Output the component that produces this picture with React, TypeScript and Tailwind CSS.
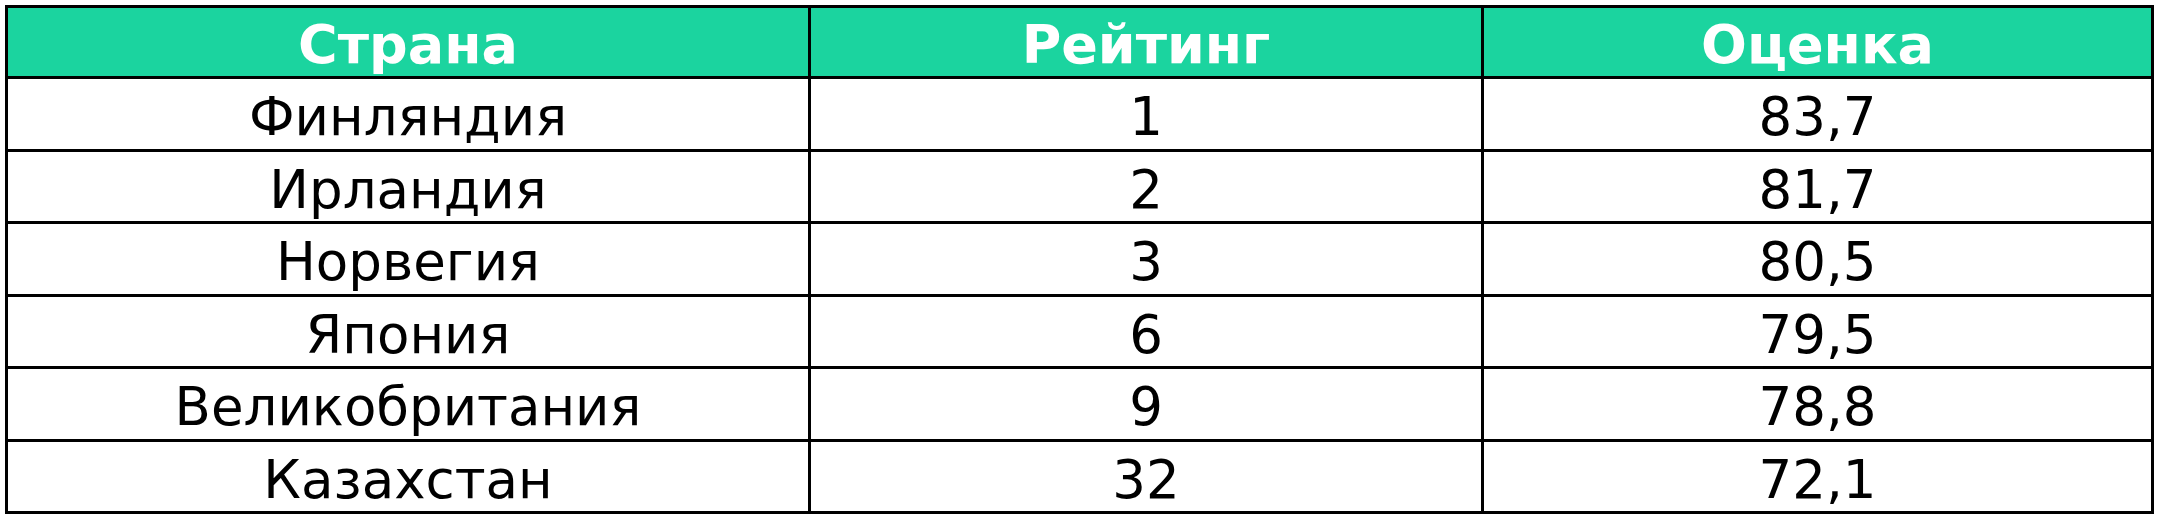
const ROWS = [
  { country: "Финляндия", rank: "1", score: "83,7" },
  { country: "Ирландия", rank: "2", score: "81,7" },
  { country: "Норвегия", rank: "3", score: "80,5" },
  { country: "Япония", rank: "6", score: "79,5" },
  { country: "Великобритания", rank: "9", score: "78,8" },
  { country: "Казахстан", rank: "32", score: "72,1" },
];

export default function App() {
  return (
    <div className="w-[2160px] h-[519px] bg-white pl-[5px] pt-[5px] font-['DejaVu_Sans',Verdana,sans-serif]">
      <table className="w-[2146px] border-collapse table-fixed">
        <colgroup>
          <col className="w-[803px]" />
          <col className="w-[673px]" />
          <col className="w-[670px]" />
        </colgroup>
        <thead>
          <tr className="h-[71px] bg-[#1bd49f] text-white">
            {["Страна", "Рейтинг", "Оценка"].map((h) => (
              <th
                key={h}
                className="border-[3px] border-black pt-[6px] text-center align-middle text-[54px] font-bold leading-none"
              >
                {h}
              </th>
            ))}
          </tr>
        </thead>
        <tbody>
          {ROWS.map((r) => (
            <tr key={r.country} className="h-[72.5px] text-black">
              <td className="border-[3px] border-black pt-[6px] text-center align-middle text-[53px] leading-none">
                {r.country}
              </td>
              <td className="border-[3px] border-black pt-[6px] text-center align-middle text-[53px] leading-none">
                {r.rank}
              </td>
              <td className="border-[3px] border-black pt-[6px] text-center align-middle text-[53px] leading-none">
                {r.score}
              </td>
            </tr>
          ))}
        </tbody>
      </table>
    </div>
  );
}
